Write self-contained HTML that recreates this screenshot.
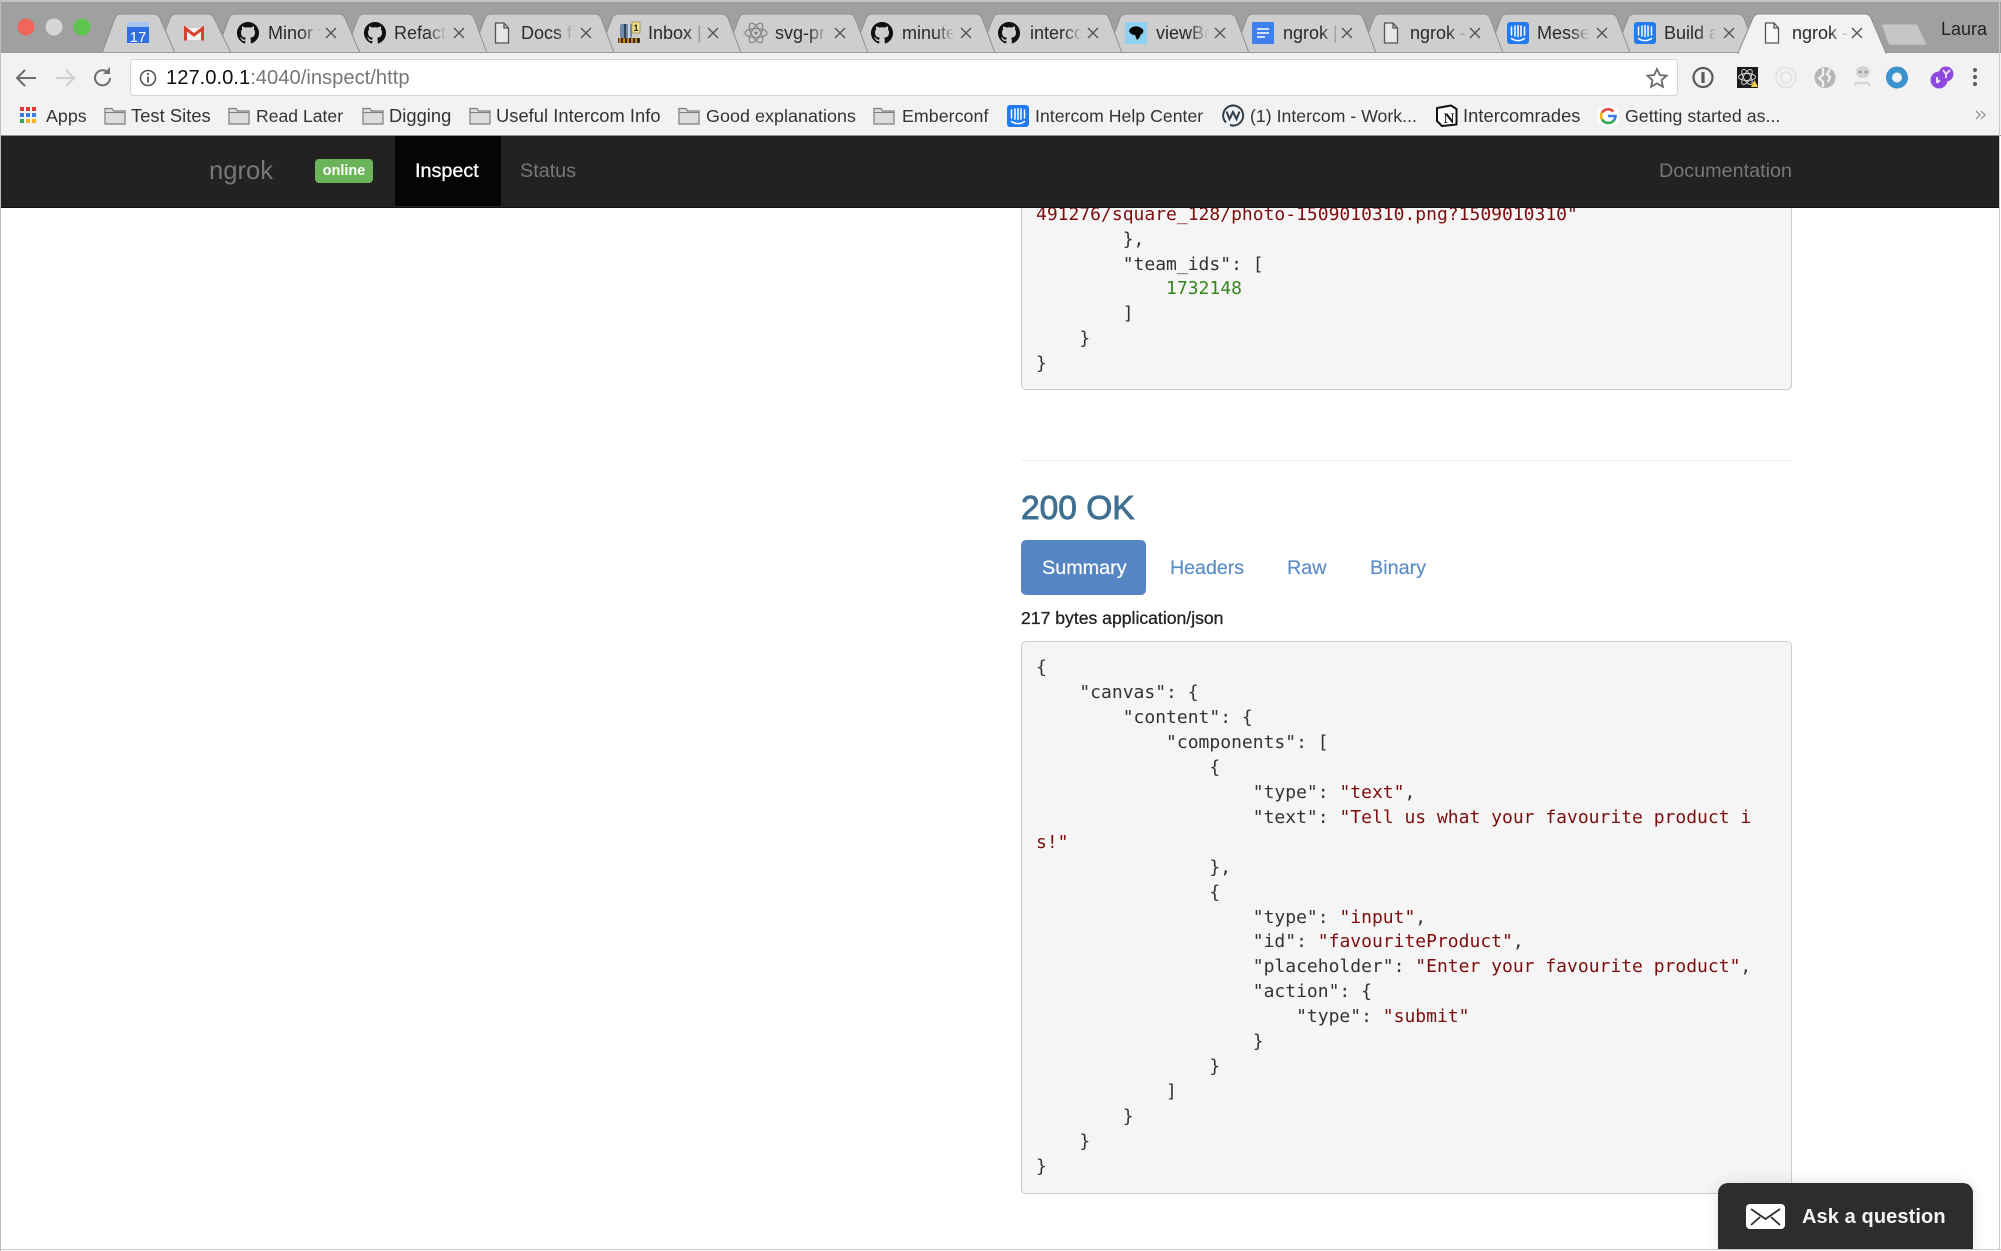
<!DOCTYPE html>
<html><head><meta charset="utf-8"><title>ngrok</title>
<style>
html,body{margin:0;padding:0;background:#fff;width:2001px;height:1251px;overflow:hidden}
body{position:relative;font-family:"Liberation Sans",sans-serif;color:#333}
.a{position:absolute;white-space:nowrap;line-height:24px}
.t{font-size:18px;color:#2a2a2a;top:21px;width:54px;overflow:hidden;-webkit-mask-image:linear-gradient(to right,#000 62%,transparent 97%);mask-image:linear-gradient(to right,#000 62%,transparent 97%)}
.g{width:60px}
.b{font-size:18.3px;color:#333;top:104px;letter-spacing:.05px}
.n{font-size:19.8px;color:#777;top:159px}
.p{font-size:19.8px;color:#5c8dc8;top:556px;-webkit-text-stroke:.2px}
pre{position:absolute;left:1021px;width:771px;box-sizing:border-box;margin:0;padding:14px 14px 10px;background:#f5f5f5;border:1px solid #ccc;border-radius:5px;font-family:"DejaVu Sans Mono","Liberation Mono",monospace;font-size:18px;line-height:24.95px;color:#333}
pre i{font-style:normal;color:#7d0d0d}
pre u{text-decoration:none;color:#35851c}
svg{position:absolute;left:0;top:0;overflow:visible}
</style></head>
<body>
<pre style="top:188px;height:202px;line-height:24.8px"><i>491276/square_128/photo-1509010310.png?1509010310"</i>
        },
        "team_ids": [
            <u>1732148</u>
        ]
    }
}</pre>
<div class="a" style="left:1021px;top:460px;width:771px;height:1px;background:#eee"></div>
<div class="a" style="left:1021px;top:489px;font-size:33.500px;line-height:40px;color:#3f7091;-webkit-text-stroke:.9px #3f7091">200 OK</div>
<div class="a" style="left:1021px;top:540px;width:125px;height:55px;background:#5585c3;border-radius:5px"></div>
<div class="a p" style="left:1042px;color:#fff">Summary</div>
<div class="a p" style="left:1170px;font-size:19.600px">Headers</div>
<div class="a p" style="left:1287px">Raw</div>
<div class="a p" style="left:1370px">Binary</div>
<div class="a" style="left:1021px;top:606px;font-size:17.6px;color:#222;-webkit-text-stroke:.3px #222">217 bytes application/json</div>
<pre style="top:641px;height:553px">{
    "canvas": {
        "content": {
            "components": [
                {
                    "type": <i>"text"</i>,
                    "text": <i>"Tell us what your favourite product i
s!"</i>
                },
                {
                    "type": <i>"input"</i>,
                    "id": <i>"favouriteProduct"</i>,
                    "placeholder": <i>"Enter your favourite product"</i>,
                    "action": {
                        "type": <i>"submit"</i>
                    }
                }
            ]
        }
    }
}</pre>

<!-- browser chrome background and icons -->
<svg width="2001" height="208" viewBox="0 0 2001 208">
<defs>
<symbol id="gh" viewBox="0 0 16 16"><path fill="#111" d="M8 0C3.58 0 0 3.58 0 8c0 3.54 2.29 6.53 5.47 7.59.4.07.55-.17.55-.38 0-.19-.01-.82-.01-1.49-2.01.37-2.53-.49-2.69-.94-.09-.23-.48-.94-.82-1.13-.28-.15-.68-.52-.01-.53.63-.01 1.08.58 1.23.82.72 1.21 1.87.87 2.33.66.07-.52.28-.87.51-1.07-1.78-.2-3.64-.89-3.64-3.95 0-.87.31-1.59.82-2.15-.08-.2-.36-1.02.08-2.12 0 0 .67-.21 2.2.82.64-.18 1.32-.27 2-.27.68 0 1.36.09 2 .27 1.53-1.04 2.2-.82 2.2-.82.44 1.1.16 1.92.08 2.12.51.56.82 1.27.82 2.15 0 3.07-1.87 3.75-3.65 3.95.29.25.54.73.54 1.48 0 1.07-.01 1.93-.01 2.2 0 .21.15.46.55.38A8.013 8.013 0 0 0 16 8c0-4.42-3.58-8-8-8z"/></symbol>
<symbol id="doc" viewBox="0 0 16 22"><path fill="#fff" fill-opacity=".5" stroke="#555" stroke-width="1.3" d="M1.5 1h8.5l4.5 5v15h-13zM10 1v5h4.5"/></symbol>
<symbol id="ic" viewBox="0 0 22 22"><rect width="22" height="22" rx="3" fill="#1f7cf2"/><path stroke="#fff" stroke-width="1.5" fill="none" stroke-linecap="round" d="M4.500 5v8M8 4v10M11 3.500v11M14 4v10M17.500 5v8M4.500 16.500c4 2.800 9 2.800 13 0"/></symbol>
<symbol id="x" viewBox="0 0 12 12"><path stroke="#555" stroke-width="1.4" d="M1 1l10 10M11 1L1 11"/></symbol>
<symbol id="fo" viewBox="0 0 22 18"><path fill="#dcdcdc" stroke="#7d7d7d" stroke-width="1.2" d="M1 17V1.500h7l1.500 2.500H21v13z"/><path fill="none" stroke="#7d7d7d" d="M1 5.500h20"/></symbol>
</defs>
<rect width="2001" height="52" fill="#a0a0a0"/>
<rect width="2001" height="2" fill="#c4c4c4"/>
<circle cx="26" cy="27" r="8.500" fill="#f0655c"/><circle cx="54" cy="27" r="8.500" fill="#d6d6d6"/><circle cx="82" cy="27" r="8.500" fill="#5fc34f"/>
<g fill="#cecece" stroke="#8e8e8e" stroke-width="1" stroke-linejoin="round">
<path d="M1615 53L1628 18Q1630 14 1634 14H1738Q1742 14 1744 18L1757 53Z"/>
<path d="M1488 53L1501 18Q1503 14 1507 14H1611Q1615 14 1617 18L1630 53Z"/>
<path d="M1361 53L1374 18Q1376 14 1380 14H1484Q1488 14 1490 18L1503 53Z"/>
<path d="M1234 53L1247 18Q1249 14 1253 14H1357Q1361 14 1363 18L1376 53Z"/>
<path d="M1107 53L1120 18Q1122 14 1126 14H1230Q1234 14 1236 18L1249 53Z"/>
<path d="M980 53L993 18Q995 14 999 14H1103Q1107 14 1109 18L1122 53Z"/>
<path d="M853 53L866 18Q868 14 872 14H976Q980 14 982 18L995 53Z"/>
<path d="M726 53L739 18Q741 14 745 14H849Q853 14 855 18L868 53Z"/>
<path d="M599 53L612 18Q614 14 618 14H722Q726 14 728 18L741 53Z"/>
<path d="M472 53L485 18Q487 14 491 14H595Q599 14 601 18L614 53Z"/>
<path d="M345 53L358 18Q360 14 364 14H468Q472 14 474 18L487 53Z"/>
<path d="M216 53L229 18Q231 14 235 14H339Q343 14 345 18L360 53Z"/>
<path d="M157 53L170 18Q172 14 176 14H208Q212 14 214 18L231 53Z"/>
<path d="M102 53L115 18Q117 14 121 14H154Q158 14 160 18L175 53Z"/>
</g>
<rect y="52" width="2001" height="84" fill="#f2f2f2"/>
<rect y="52" width="2001" height="1" fill="#999"/>
<path d="M1738 53L1753 18Q1755 14 1759 14H1865Q1869 14 1871 18L1886 53Z" fill="#f2f2f2" stroke="#8e8e8e"/>
<rect x="1739" y="52" width="146" height="2" fill="#f2f2f2"/>
<path d="M1882 26Q1881 24 1884 24H1915Q1917 24 1918 26L1926 43Q1927 45 1924 45H1891Q1889 45 1888 43Z" fill="#c6c6c6" stroke="#a8a8a8"/>
<!-- tab icons -->
<path d="M127 26Q127 22 131 22H145Q149 22 149 26V43H127Z" fill="#2f6fe0"/><rect x="127" y="22" width="22" height="5" fill="#a9c4f2"/>
<text x="138" y="42" font-family="Liberation Sans" font-size="15" fill="#fff" text-anchor="middle">17</text>
<rect x="185" y="28" width="18" height="12" fill="#f2f2f2"/><path d="M185.500 40.500V28.500l8.500 6.500 8.500-6.500v12" fill="none" stroke="#d8402f" stroke-width="3"/>
<use href="#gh" x="237" y="22" width="22" height="22"/><use href="#gh" x="364" y="22" width="22" height="22"/>
<use href="#doc" x="494" y="22" width="16" height="22"/>
<rect x="620" y="24" width="12" height="14" rx="2" fill="#6f8aa6"/><rect x="624" y="24" width="2" height="14" fill="#2e4257"/><rect x="628" y="24" width="2" height="14" fill="#c9d6e2"/><rect x="632" y="22" width="8" height="11" fill="#f2de8a" stroke="#8a7a30" stroke-width=".6"/><text x="636" y="31" font-family="Liberation Sans" font-size="9" font-weight="bold" text-anchor="middle" fill="#222">1</text><rect x="618" y="38" width="22" height="5" rx="1" fill="#3c2a0a"/><path d="M620 38v5M624 38v5M628 38v5M632 38v5M636 38v5" stroke="#f0a020" stroke-width="1.500"/>
<g fill="none" stroke="#888" stroke-width="1.300"><ellipse cx="756" cy="33" rx="11" ry="4.500" transform="rotate(60 756 33)"/><ellipse cx="756" cy="33" rx="11" ry="4.500" transform="rotate(-60 756 33)"/><ellipse cx="756" cy="33" rx="11" ry="4.500"/></g><circle cx="756" cy="33" r="1.500" fill="#777"/>
<use href="#gh" x="871" y="22" width="22" height="22"/><use href="#gh" x="998" y="22" width="22" height="22"/>
<rect x="1125" y="22" width="22" height="22" fill="#8ed1f2"/><path d="M1129 31c1-5 9-6 12-3 3 1 3 4 1 6-1 0-2 1-2 3l-3 3-2-5c-2 0-5-1-6-4z" fill="#050505"/>
<rect x="1252" y="22" width="22" height="22" rx="1" fill="#3f7fee"/><path d="M1257 29h12M1257 33h12M1257 37h8" stroke="#fff" stroke-width="1.600"/>
<use href="#doc" x="1383" y="22" width="16" height="22"/>
<use href="#ic" x="1507" y="22" width="22" height="22"/><use href="#ic" x="1634" y="22" width="22" height="22"/>
<use href="#doc" x="1764" y="22" width="16" height="22"/>
<!-- tab close buttons -->
<g>
<use href="#x" x="325" y="27" width="12" height="12"/><use href="#x" x="453" y="27" width="12" height="12"/><use href="#x" x="580" y="27" width="12" height="12"/><use href="#x" x="707" y="27" width="12" height="12"/><use href="#x" x="834" y="27" width="12" height="12"/><use href="#x" x="960" y="27" width="12" height="12"/><use href="#x" x="1087" y="27" width="12" height="12"/><use href="#x" x="1214" y="27" width="12" height="12"/><use href="#x" x="1341" y="27" width="12" height="12"/><use href="#x" x="1469" y="27" width="12" height="12"/><use href="#x" x="1596" y="27" width="12" height="12"/><use href="#x" x="1723" y="27" width="12" height="12"/><use href="#x" x="1851" y="27" width="12" height="12"/>
</g>
<!-- toolbar -->
<path d="M36 78H17M25 70l-8 8 8 8" fill="none" stroke="#6e6e6e" stroke-width="2"/>
<path d="M56 78h18M66 70l8 8-8 8" fill="none" stroke="#cfcfcf" stroke-width="2"/>
<path d="M110 78a7.500 7.500 0 1 1-2.500-5.800" fill="none" stroke="#6e6e6e" stroke-width="2"/><path d="M110 67v7h-7z" fill="#6e6e6e"/>
<rect x="130.500" y="59.500" width="1547" height="36" rx="3" fill="#fff" stroke="#d4d4d4"/>
<circle cx="148" cy="78" r="7.500" fill="none" stroke="#555" stroke-width="1.600"/><path d="M148 76.500v6M148 73v2" stroke="#555" stroke-width="1.800"/>
<path d="M1657 69l2.800 6 6.700.7-5 4.500 1.400 6.600-5.900-3.400-5.900 3.400 1.400-6.600-5-4.500 6.700-.7z" fill="none" stroke="#6a6a6a" stroke-width="1.800"/>
<circle cx="1703" cy="77.500" r="9.500" fill="none" stroke="#5a5a5a" stroke-width="2.200"/><path d="M1703 72v11" stroke="#5a5a5a" stroke-width="3.200"/>
<rect x="1737" y="67" width="21" height="21" fill="#1c1c1c"/><g fill="none" stroke="#ddd" stroke-width=".9"><ellipse cx="1747" cy="77" rx="8.500" ry="3.500" transform="rotate(60 1747 77)"/><ellipse cx="1747" cy="77" rx="8.500" ry="3.500" transform="rotate(-60 1747 77)"/><ellipse cx="1747" cy="77" rx="8.500" ry="3.500"/></g><path d="M1751 87l3.500-7 3.500 7z" fill="#f0cf45"/>
<g fill="none" stroke="#e0e0e0" stroke-width="1.500"><circle cx="1786" cy="77.500" r="10"/><circle cx="1786" cy="77.500" r="5.500"/></g>
<circle cx="1825" cy="77.500" r="10.500" fill="#b5b5b5"/><path d="M1823 68v7l-4 3 4 4v5M1830 69l-3 5 3 3-2 5" stroke="#f2f2f2" stroke-width="2.200" fill="none"/>
<ellipse cx="1863" cy="72" rx="7" ry="6" fill="#d4d4d4"/><circle cx="1860" cy="72" r="1.500" fill="#999"/><circle cx="1866" cy="72" r="1.500" fill="#999"/><path d="M1855 86c1-6 4-1 6-3 2-2 3 2 4 0 2-2 3 1 5 3" fill="none" stroke="#d4d4d4" stroke-width="2"/>
<circle cx="1897" cy="77.500" r="8" fill="none" stroke="#3a92cf" stroke-width="6"/>
<circle cx="1939" cy="80" r="8.500" fill="#9049e0"/><circle cx="1946" cy="74" r="7.500" fill="#9049e0"/><path d="M1937 77v6M1940 80l-3 3M1943 70l3 4 4-4M1946 74v4" stroke="#f2e6ff" stroke-width="1.800" fill="none"/>
<g fill="#5f5f5f"><circle cx="1975" cy="70" r="2.100"/><circle cx="1975" cy="77" r="2.100"/><circle cx="1975" cy="84" r="2.100"/></g>
<!-- bookmark icons -->
<g><rect x="20" y="107" width="4" height="4" fill="#d8382c"/><rect x="26" y="107" width="4" height="4" fill="#d8382c"/><rect x="32" y="107" width="4" height="4" fill="#d8382c"/><rect x="20" y="113" width="4" height="4" fill="#3b7de8"/><rect x="26" y="113" width="4" height="4" fill="#3b7de8"/><rect x="32" y="113" width="4" height="4" fill="#3b7de8"/><rect x="20" y="119" width="4" height="4" fill="#32a853"/><rect x="26" y="119" width="4" height="4" fill="#f3b21c"/><rect x="32" y="119" width="4" height="4" fill="#f3b21c"/></g>
<use href="#fo" x="104" y="107" width="22" height="18"/><use href="#fo" x="228" y="107" width="22" height="18"/><use href="#fo" x="362" y="107" width="22" height="18"/><use href="#fo" x="469" y="107" width="22" height="18"/><use href="#fo" x="678" y="107" width="22" height="18"/><use href="#fo" x="873" y="107" width="22" height="18"/>
<use href="#ic" x="1007" y="105" width="22" height="22"/>
<path d="M1226 122.500a10 10 0 1 1 4 2.500" fill="none" stroke="#2f3e4a" stroke-width="2"/><path d="M1226.500 111.500l3 7.500 3.500-7 3.500 7 3-7.500" fill="none" stroke="#2f3e4a" stroke-width="2"/>
<path d="M1437 108l14-2.500 5.500 3.500v15.500l-14.500 1.500-5-5z" fill="#fff" stroke="#111" stroke-width="2" stroke-linejoin="round"/><text x="1449" y="123" font-family="Liberation Serif" font-size="15" font-weight="bold" text-anchor="middle" fill="#111">N</text>
<circle cx="1608" cy="116" r="11" fill="#fff"/>
<path d="M1613.500 111.500a7.500 7.500 0 0 0-11.500 1" fill="none" stroke="#e8453a" stroke-width="2.600"/><path d="M1602 112.500a7.500 7.500 0 0 0 0 7" fill="none" stroke="#f3b21c" stroke-width="2.600"/><path d="M1602 119.500a7.500 7.500 0 0 0 12 .8" fill="none" stroke="#32a853" stroke-width="2.600"/><path d="M1608 116h7.500a7.500 7.500 0 0 1-1.500 4.300" fill="none" stroke="#3b7de8" stroke-width="2.600"/>
<path d="M1976 111l4 4-4 4M1981 111l4 4-4 4" fill="none" stroke="#888" stroke-width="1.200"/>
<!-- ngrok nav -->
<rect y="135" width="2001" height="1" fill="#8c8c8c"/>
<rect y="136" width="2000" height="72" fill="#222"/>
<rect y="207" width="2000" height="1" fill="#111"/>
<rect x="395" y="136" width="106" height="70" fill="#050505"/>
<rect x="315" y="159" width="58" height="24" rx="4" fill="#6cb45b"/>
</svg>

<!-- tab titles -->
<span class="a t" style="left:268px">Minor v</span>
<span class="a t" style="left:394px">Refactor</span>
<span class="a t" style="left:521px">Docs f</span>
<span class="a t g" style="left:648px">Inbox |</span>
<span class="a t" style="left:775px">svg-pr</span>
<span class="a t" style="left:902px">minute</span>
<span class="a t" style="left:1030px">interco</span>
<span class="a t" style="left:1156px">viewBo</span>
<span class="a t g" style="left:1283px">ngrok |</span>
<span class="a t g" style="left:1410px">ngrok -</span>
<span class="a t" style="left:1537px">Messe</span>
<span class="a t" style="left:1664px">Build a</span>
<span class="a t g" style="left:1792px">ngrok -</span>
<span class="a" style="left:1941px;top:17px;font-size:18px;color:#222">Laura</span>
<!-- url -->
<span class="a" style="left:166px;top:66px;font-size:20.2px;color:#777"><span style="color:#111">127.0.0.1</span>:4040/inspect/http</span>
<!-- bookmarks -->
<span class="a b" style="left:46px;font-size:17.800px">Apps</span>
<span class="a b" style="left:131px">Test Sites</span>
<span class="a b" style="left:256px;font-size:17.500px">Read Later</span>
<span class="a b" style="left:389px">Digging</span>
<span class="a b" style="left:496px">Useful Intercom Info</span>
<span class="a b" style="left:706px;font-size:17.900px">Good explanations</span>
<span class="a b" style="left:902px;font-size:17.800px">Emberconf</span>
<span class="a b" style="left:1035px;font-size:17.600px">Intercom Help Center</span>
<span class="a b" style="left:1250px;font-size:17.600px">(1) Intercom - Work...</span>
<span class="a b" style="left:1463px">Intercomrades</span>
<span class="a b" style="left:1625px;font-size:17.700px">Getting started as...</span>
<!-- nav -->
<span class="a" style="left:209px;top:159px;font-size:25.6px;color:#777">ngrok</span>
<span class="a" style="left:315px;top:159px;width:58px;text-align:center;font-size:14.500px;font-weight:bold;color:#fff">online</span>
<span class="a n" style="left:415px;color:#fff;-webkit-text-stroke:.3px #fff">Inspect</span>
<span class="a n" style="left:520px">Status</span>
<span class="a n" style="left:1659px">Documentation</span>
<!-- ask a question -->
<div class="a" style="left:1718px;top:1183px;width:255px;height:66px;background:#2d2d2d;border-radius:10px 10px 0 0;box-shadow:0 0 14px rgba(0,0,0,.12)"></div>
<svg width="2001" height="1251" viewBox="0 0 2001 1251" style="pointer-events:none">
<rect x="1746" y="1204" width="39" height="25" rx="4" fill="#fff"/>
<path d="M1751 1209l14.500 10 14.500-10M1751 1225l9-8M1780 1225l-9-8" fill="none" stroke="#2d2d2d" stroke-width="1.800"/>
</svg>
<span class="a" style="left:1802px;top:1205px;font-size:20px;font-weight:bold;color:#f5f5f5;letter-spacing:.1px">Ask a question</span>
<!-- window frame -->
<div class="a" style="left:0;top:0;width:1px;height:1251px;background:#bdbdbd"></div>
<div class="a" style="left:1999px;top:0;width:1px;height:1250px;background:#c8c8c8"></div>
<div class="a" style="left:0;top:1249px;width:2001px;height:1px;background:#c8c8c8"></div>
</body></html>
